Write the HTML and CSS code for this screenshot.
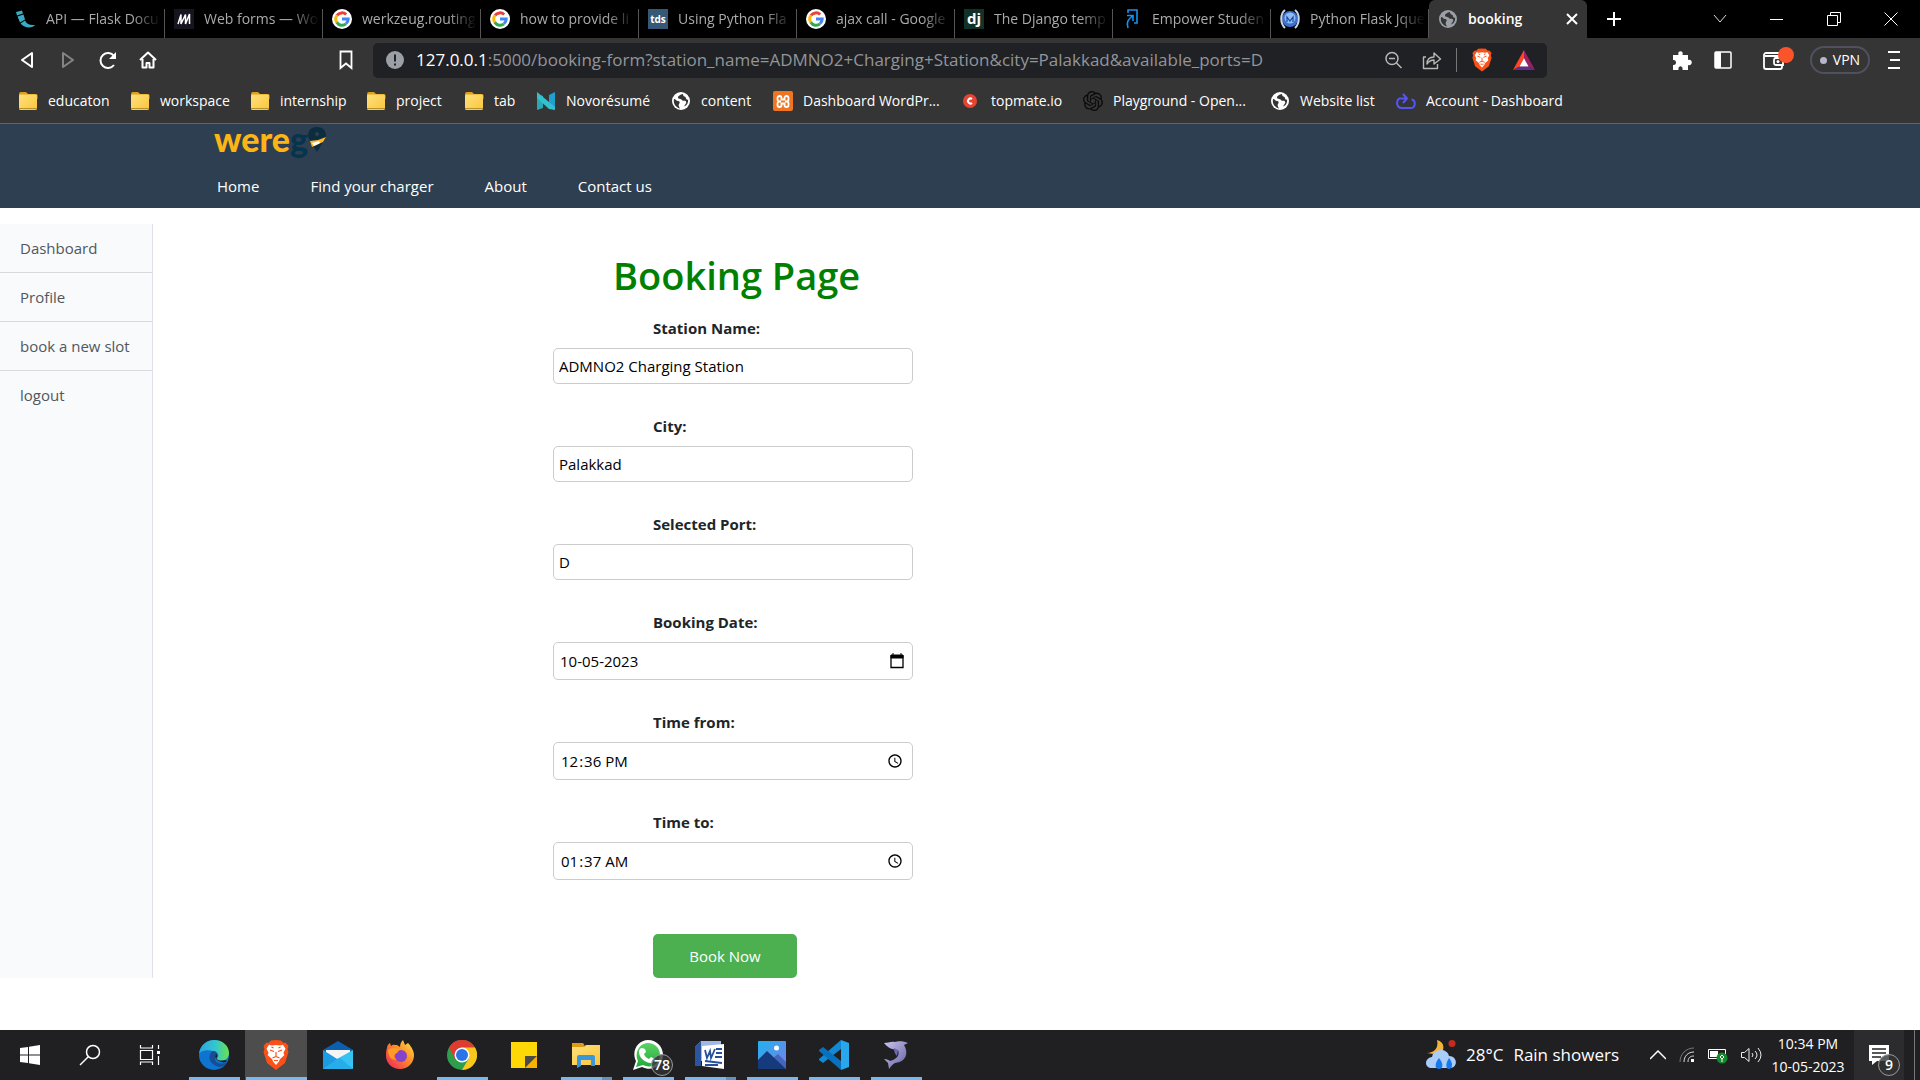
FILE: index.html
```html
<!DOCTYPE html>
<html lang="en">
<head>
<meta charset="utf-8">
<title>booking</title>
<link rel="stylesheet" href="styles.css">
</head>
<body>
<svg class="sprite" aria-hidden="true">
  <defs>
    <linearGradient id="edgeA" x1="0" y1="0" x2="1" y2="0"><stop offset="0" stop-color="#2aa5e0"/><stop offset=".55" stop-color="#33c7cf"/><stop offset="1" stop-color="#6be04b"/></linearGradient>
    <linearGradient id="foxA" x1="1" y1="0" x2="0" y2="1"><stop offset="0" stop-color="#ffe84a"/><stop offset=".45" stop-color="#ff8a25"/><stop offset="1" stop-color="#ee1c63"/></linearGradient>
    <linearGradient id="folderA" x1="0" y1="0" x2="1" y2="1"><stop offset="0" stop-color="#ffe07c"/><stop offset="1" stop-color="#f9c63c"/></linearGradient>
    <linearGradient id="photoA" x1="0" y1="0" x2="1" y2="1"><stop offset="0" stop-color="#1fb2f0"/><stop offset="1" stop-color="#7e7fe8"/></linearGradient>
    <linearGradient id="dolA" x1="0" y1="0" x2="1" y2="1"><stop offset="0" stop-color="#c9c6f2"/><stop offset="1" stop-color="#625c9c"/></linearGradient>
    <linearGradient id="waA" x1="0" y1="0" x2="0" y2="1"><stop offset="0" stop-color="#5dd365"/><stop offset="1" stop-color="#23a83a"/></linearGradient>
  </defs>
  <symbol id="google" viewBox="0 0 20 20"><circle cx="10" cy="10" r="10" fill="#fff"/><g fill="none" stroke-width="3"><path d="M5 6.4A6.2 6.2 0 0 1 14.2 5.5" stroke="#ea4335"/><path d="M4.9 13.5A6.2 6.2 0 0 1 5 6.4" stroke="#fbbc05"/><path d="M14 14.8A6.2 6.2 0 0 1 4.8 13.4" stroke="#34a853"/><path d="M10 10h6.2A6.2 6.2 0 0 1 14 14.7" stroke="#4285f4"/></g></symbol>
  <symbol id="globe" viewBox="0 0 20 20"><circle cx="10" cy="10" r="9" fill="currentColor"/><path d="M3 8c2 0 2 2 4 2s2 2 1 3 0 3 1 4.500C5 16.500 2 13 3 8zM10 3.500c-1 1-3 1-3 3s3 1 4 2.500 3 0 4 1.500-1 3-2 5c3-1 4.500-4 4-7-1 .5-2 0-2-1.500S12 6 12 3z" fill="var(--hole)"/></symbol>
  <symbol id="folder" viewBox="0 0 20 20"><path d="M1 4V3a2 2 0 0 1 2-2h5l2 2h8a1.500 1.500 0 0 1 1.500 1.500V8H1z" fill="#dfa117"/><rect x="1" y="3.500" width="18" height="15.500" rx="1.500" fill="url(#folderA)"/><path d="M1 17.500h18" stroke="#b89025"/></symbol>
  <symbol id="brave" viewBox="0 0 26 30"><path d="M13 0l5 .5L20.500 3l2-.5L25.500 6l-1 3 1 3-3.500 11L13 30 4 23 .5 12l1-3-1-3 3-3.500 2 .5L8 .5z" fill="#fb5016"/><path d="M13 5l4 .6 3-.8 2.500 4-2 4 .8 2.500-4.500 4-.8 2.200L13 25l-3-3.500-.8-2.200-4.500-4L5.500 12.800l-2-4L6 4.800l3 .8z" fill="#fff"/><path d="M7 10l4 1.500M19 10l-4 1.500M13 12v5M9.500 18l3.500-1.500 3.500 1.500M11 20.500h4M8.500 7l2 1M17.500 7l-2 1" fill="none" stroke="#fb5016" stroke-width="1.200"/></symbol>
</svg>

<header class="browser">
  <nav class="tabs" aria-label="Tabs">
    <a class="tab" href="#"><svg class="fav" viewBox="0 0 20 20"><path d="M0 3l6-1.500 1 3-6 2zM1.500 7.500l6-2 1.500 5-5 3zM4.500 14.500L9 11.500c2 4 5 5 10 4.500-2 3-10 4-14.500-1.500z" fill="#3babc3"/></svg><span>API — Flask Docu</span></a>
    <a class="tab" href="#"><svg class="fav" viewBox="0 0 20 20"><path d="M0 0h20v20H0z" fill="#15141f"/><path d="M4 15L7 5.500V15l4.500-9.500V15L15.500 5v10" fill="none" stroke="#fff" stroke-width="1.500"/></svg><span>Web forms — Wo</span></a>
    <a class="tab" href="#"><svg class="fav"><use href="#google"/></svg><span>werkzeug.routing</span></a>
    <a class="tab" href="#"><svg class="fav"><use href="#google"/></svg><span>how to provide li</span></a>
    <a class="tab" href="#"><b class="fav badge-tds">tds</b><span>Using Python Fla</span></a>
    <a class="tab" href="#"><svg class="fav"><use href="#google"/></svg><span>ajax call - Google</span></a>
    <a class="tab" href="#"><b class="fav badge-dj">dj</b><span>The Django temp</span></a>
    <a class="tab" href="#"><svg class="fav" viewBox="0 0 20 20"><path d="M6 4V1h9v13h-3M5 6.500h6V12m0-5.500c-5 4-7 7-5 12.500" fill="none" stroke="#1593f2" stroke-width="1.600"/></svg><span>Empower Studen</span></a>
    <a class="tab" href="#"><svg class="fav" viewBox="0 0 20 20"><circle cx="10" cy="10" r="8" fill="#3c70d0"/><circle cx="10" cy="9" r="5.500" fill="#8dbcf5"/><path d="M5 1C0 5 0 14 5 19M15 1c5 4 5 13 0 18" fill="none" stroke="#cbd4e2" stroke-width="2"/><path d="M7 13V8l3 4 3-4v5" fill="none" stroke="#1e439f" stroke-width="1.200"/></svg><span>Python Flask Jque</span></a>
    <a class="tab active" href="#"><svg class="fav"><use href="#globe"/></svg><span>booking</span><svg class="tab-x" viewBox="0 0 12 12"><path d="M1 1l10 10M11 1L1 11" stroke="#fff" stroke-width="2"/></svg></a>
    <button class="new-tab" aria-label="New tab"><svg width="16" height="16" viewBox="0 0 16 16"><path d="M8 1v14M1 8h14" stroke="#fff" stroke-width="2"/></svg></button>
    <div class="win">
      <button aria-label="Search tabs"><svg width="16" height="14" viewBox="0 0 16 14"><path d="M2 3l6 7 6-7" fill="none" stroke="#ddd"/></svg></button>
      <button aria-label="Minimize"><svg width="14" height="14" viewBox="0 0 14 14"><path d="M0 7.500h13" stroke="#fff"/></svg></button>
      <button aria-label="Restore"><svg width="14" height="14" viewBox="0 0 14 14"><path d="M.5 3.500h10v10H.5zM3.500 3V.500h10v10H11" fill="none" stroke="#fff"/></svg></button>
      <button aria-label="Close"><svg width="14" height="14" viewBox="0 0 14 14"><path d="M.5 .5l13 13M13.500 .5l-13 13" stroke="#fff"/></svg></button>
    </div>
  </nav>

  <div class="toolbar">
    <div class="nav-buttons">
      <button aria-label="Back"><svg width="20" height="20" viewBox="0 0 20 20"><path d="M14 3v14L4 10z" fill="none" stroke="#fff" stroke-width="2" stroke-linejoin="round"/></svg></button>
      <button aria-label="Forward"><svg width="20" height="20" viewBox="0 0 20 20"><path d="M5 3v14l10-7z" fill="none" stroke="#858585" stroke-width="2" stroke-linejoin="round"/></svg></button>
      <button aria-label="Reload"><svg width="20" height="20" viewBox="0 0 20 20"><path d="M16 6A7.500 7.500 0 1 0 16 15" fill="none" stroke="#fff" stroke-width="2"/><path d="M18 2v7h-7z" fill="#fff"/></svg></button>
      <button aria-label="Home"><svg width="20" height="20" viewBox="0 0 20 20"><path d="M2 10l8-7.500L18 10M4.500 9v8.500h4V13h3v4.500h4V9" fill="none" stroke="#fff" stroke-width="2" stroke-linejoin="round"/></svg></button>
    </div>
    <button class="bookmark" aria-label="Bookmark"><svg width="18" height="20" viewBox="0 0 18 20"><path d="M3.500 1.500h11V18L9 13.500 3.500 18z" fill="none" stroke="#fff" stroke-width="1.800"/></svg></button>
    <div class="address">
      <svg width="20" height="20" viewBox="0 0 20 20"><circle cx="10" cy="10" r="9" fill="#9aa0a6"/><path d="M10 4.500v7M10 13.500v2" stroke="#202124" stroke-width="2"/></svg>
      <span class="url"><b>127.0.0.1</b>:5000/booking-form?station_name=ADMNO2+Charging+Station&amp;city=Palakkad&amp;available_ports=D</span>
      <div class="address-icons">
        <svg width="20" height="20" viewBox="0 0 20 20"><circle cx="9" cy="8.500" r="6" fill="none" stroke="#b8b8b8" stroke-width="1.500"/><path d="M6 8.500h6M13.500 13l5 5" stroke="#b8b8b8" stroke-width="1.500"/></svg>
        <svg width="20" height="20" viewBox="0 0 20 20"><path d="M4 7H1.500v11.500h14V14M5 14c0-5 3-7 7-7V3l6.500 6-6.500 5v-4c-3 0-5 1-7 4z" fill="none" stroke="#b8b8b8" stroke-width="1.400" stroke-linejoin="round"/></svg>
        <i></i>
        <svg width="20" height="24"><use href="#brave"/></svg>
        <svg class="bat" width="22" height="22" viewBox="0 0 24 22"><path d="M12 0L0 22l7-4 5-9z" fill="#ff4724"/><path d="M12 0l12 22-7-4-5-9z" fill="#9e1f63"/><path d="M0 22h24l-7-4H7z" fill="#662d91"/><path d="M12 9l5 9H7z" fill="#fff"/></svg>
      </div>
    </div>
    <div class="tools">
      <svg width="20" height="22" viewBox="0 0 20 22"><path d="M1 6h5.500C5 1 12 1 10.500 6H16v5c5-1.500 5 6.500 0 5v5h-5.500c1-5-5-5-4 0H1v-5c4 1 4-6 0-5z" fill="#fff"/></svg>
      <svg width="18" height="18" viewBox="0 0 18 18"><rect x="1" y="1" width="16" height="16" rx="1" fill="none" stroke="#fff" stroke-width="1.500"/><path d="M1 1h6v16H1z" fill="#fff"/></svg>
      <svg width="32" height="26" viewBox="0 0 32 26"><path d="M20 10V8c0-1-1-2-2-2H4C3 6 2 7 2 8v12c0 1.500 1 2 2 2h14c1 0 2-1 2-2v-2M3 9h14M21 11h-7c-2 0-2 1-2 3.500s0 3.500 2 3.500h7z" fill="none" stroke="#fff" stroke-width="1.800"/><circle cx="16" cy="14.500" r="1.500" fill="#fff"/><circle cx="24" cy="8" r="8" fill="#fb542b"/></svg>
      <button class="vpn"><i></i>VPN</button>
      <button class="burger" aria-label="Menu"><svg width="12" height="18" viewBox="0 0 12 18"><path d="M0 1h12M2 9h10M0 17h12" stroke="#fff" stroke-width="2"/></svg></button>
    </div>
  </div>

  <nav class="bookmarks" aria-label="Bookmarks">
    <a href="#"><svg><use href="#folder"/></svg>educaton</a>
    <a href="#"><svg><use href="#folder"/></svg>workspace</a>
    <a href="#"><svg><use href="#folder"/></svg>internship</a>
    <a href="#"><svg><use href="#folder"/></svg>project</a>
    <a href="#"><svg><use href="#folder"/></svg>tab</a>
    <a href="#"><svg viewBox="0 0 20 20"><path d="M1 3l6 2v12l-6 2z" fill="#2aa9b5"/><path d="M13 4l6-3v15l-6 2z" fill="#1e9fd0"/><path d="M1 1l18 15v3l-6-1L1 7z" fill="#35c0cf"/></svg>Novorésumé</a>
    <a href="#"><svg class="white"><use href="#globe"/></svg>content</a>
    <a href="#"><svg viewBox="0 0 20 20"><rect width="20" height="20" rx="2" fill="#ee7623"/><path d="M8 10.500H6.500a2 2 0 0 1-2-2V7a2 2 0 0 1 4 0v1.500h3V7a2 2 0 0 1 4 0v1.500a2 2 0 0 1-2 2H12M8 10.500H6.500a2 2 0 0 0-2 2V14a2 2 0 0 0 4 0v-1.500h3V14a2 2 0 0 0 4 0v-1.500a2 2 0 0 0-2-2H12" fill="none" stroke="#fff" stroke-width="1.800"/></svg>Dashboard WordPr...</a>
    <a href="#"><svg viewBox="0 0 20 20"><circle cx="9" cy="10" r="7" fill="#e64432"/><path d="M11 8a2.500 2.500 0 1 0 0 4" fill="none" stroke="#fff" stroke-width="2"/></svg>topmate.io</a>
    <a href="#"><svg viewBox="0 0 24 24"><path d="M22.282 9.821a5.985 5.985 0 0 0-.516-4.911 6.046 6.046 0 0 0-6.510-2.900A6.065 6.065 0 0 0 4.981 4.182a5.985 5.985 0 0 0-3.998 2.900 6.046 6.046 0 0 0 .743 7.097 5.980 5.980 0 0 0 .511 4.911 6.051 6.051 0 0 0 6.515 2.900A5.985 5.985 0 0 0 13.260 24a6.056 6.056 0 0 0 5.772-4.206 5.990 5.990 0 0 0 3.998-2.900 6.056 6.056 0 0 0-.748-7.073zM13.260 22.430a4.476 4.476 0 0 1-2.876-1.041l.141-.080 4.779-2.758a.795.795 0 0 0 .393-.681v-6.737l2.020 1.169v5.621a4.504 4.504 0 0 1-4.457 4.507zM3.600 18.304a4.471 4.471 0 0 1-.535-3.014l.142.085 4.783 2.759a.771.771 0 0 0 .780 0l5.843-3.369v2.332L9.740 19.950A4.499 4.499 0 0 1 3.600 18.304zM2.341 7.896a4.485 4.485 0 0 1 2.365-1.973v5.677a.766.766 0 0 0 .388.676l5.815 3.355-2.020 1.168-4.869-2.786A4.504 4.504 0 0 1 2.341 7.896zm16.596 3.856l-5.833-3.388L15.120 7.200l4.869 2.791a4.494 4.494 0 0 1-.676 8.105v-5.678a.790.790 0 0 0-.376-.666zm2.011-3.024l-.142-.085-4.774-2.782a.776.776 0 0 0-.785 0L9.409 9.230V6.898l4.859-2.787a4.499 4.499 0 0 1 6.680 4.617zM8.307 12.863l-2.020-1.164V6.074a4.499 4.499 0 0 1 7.375-3.454l-.142.081-4.778 2.758a.795.795 0 0 0-.393.681zm1.097-2.365l2.602-1.500 2.607 1.500v2.999l-2.597 1.500-2.607-1.500z" fill="#0a0a0a" fill-rule="evenodd"/></svg>Playground - Open...</a>
    <a href="#"><svg class="white"><use href="#globe"/></svg>Website list</a>
    <a href="#"><svg viewBox="0 0 20 20"><path d="M3 7.500C-.500 11 1 17 5.500 17h9c5.500 0 5.500-8 1-8.500M3 7.500h7M7 3l4 4.500L7 12" fill="none" stroke="#5555f2" stroke-width="2"/></svg>Account - Dashboard</a>
  </nav>
</header>

<header class="site-header">
  <a class="logo" href="#" aria-label="werego"><span>were</span><em>g</em><svg width="18" height="26" viewBox="0 0 18 26"><path d="M9 26L3 16C-3 9 1 1 9 1s12 8 6 15z" fill="#0c2c3f"/><circle cx="9" cy="8" r="2" fill="#2e3f51"/><path d="M2 15l8-1 8-3-3 5-11 5z" fill="#fdb827"/><path d="M4 17l7-2 1 2-6 3z" fill="#fff"/></svg></a>
  <nav class="site-nav"><a href="#">Home</a><a href="#">Find your charger</a><a href="#">About</a><a href="#">Contact us</a></nav>
</header>

<div class="content">
  <aside class="sidebar"><a href="#">Dashboard</a><a href="#">Profile</a><a href="#">book a new slot</a><a href="#">logout</a></aside>
  <main>
    <form class="booking">
      <h1>Booking Page</h1>
      <div class="field"><label for="station">Station Name:</label><input id="station" type="text" value="ADMNO2 Charging Station"></div>
      <div class="field"><label for="city">City:</label><input id="city" type="text" value="Palakkad"></div>
      <div class="field"><label for="port">Selected Port:</label><input id="port" type="text" value="D"></div>
      <div class="field picker"><label for="date">Booking Date:</label>
        <div class="date-box"><input id="date" type="text" value="10-05-2023"><button type="button" aria-label="Pick a date"><svg width="14" height="16" viewBox="0 0 14 16"><path d="M1 3h12v11.500H1z" fill="none" stroke="#000" stroke-width="1.300"/><path d="M1 2h12v3H1zM3 0v3M11 0v3" stroke="#000"/></svg></button></div>
      </div>
      <div class="field picker"><label for="from">Time from:</label><input id="from" type="time" value="12:36"></div>
      <div class="field picker"><label for="to">Time to:</label><input id="to" type="time" value="01:37"></div>
      <button class="submit" type="submit">Book Now</button>
    </form>
  </main>
</div>

<footer class="taskbar">
  <div class="apps">
    <button aria-label="Start"><svg width="20" height="20" viewBox="0 0 20 20"><path d="M0 3l8-1v7.500H0zM9 1.800L20 0v9.500H9zM0 10.500h8V18l-8-1zM9 10.500h11V20L9 18.200z" fill="#fff"/></svg></button>
    <button aria-label="Search"><svg width="22" height="22" viewBox="0 0 22 22"><circle cx="14" cy="8" r="6.500" fill="none" stroke="#fff" stroke-width="1.500"/><path d="M9.500 12.500L1 21" stroke="#fff" stroke-width="1.500"/></svg></button>
    <button aria-label="Task view"><svg width="22" height="20" viewBox="0 0 22 20"><path d="M1.500 0v3h12V0M1.500 5.500h12v9h-12zM1.500 20v-3h12v3M19.500 0v4M19.500 11v9" fill="none" stroke="#fff" stroke-width="1.200"/><path d="M18 6h3v3h-3z" fill="#fff"/></svg></button>
    <button class="app run" aria-label="Edge"><svg width="30" height="30" viewBox="0 0 30 30"><circle cx="15" cy="15" r="15" fill="#0d74d1"/><path d="M0 14C1 5 8 0 15 0c9 0 15 6 15 13 0 5-4 8-8 8-4 0-5-2-3-4 1-3-1-6-5-6C8 9 1 11 0 14z" fill="url(#edgeA)"/><path d="M14 11c-4 2-7 12 6 16 3 0 6-2 8-5-5 3-13 2-12-5 0-2 1-3 2-3-1-2-2-3-4-3z" fill="#174d94"/><path d="M17 14c-2 3 0 7 6 8 2 1 4 0 5-1l-2-1c-7 2-10-2-8-3 1-1 0-3-1-3z" fill="#202022"/></svg></button>
    <button class="app run current" aria-label="Brave"><svg width="26" height="30"><use href="#brave"/></svg></button>
    <button class="app" aria-label="Mail"><svg width="30" height="28" viewBox="0 0 30 28"><path d="M0 9l15-9 15 9v10H0z" fill="#0c5fae"/><path d="M3 9h24v12H3z" fill="#f4f4f4"/><path d="M0 9l30 19H0z" fill="#1c9be3"/><path d="M30 9v19L14 18z" fill="#36c3f2"/><path d="M0 28l14-10 3-1 13 11z" fill="#27aeea"/></svg></button>
    <button class="app" aria-label="Firefox"><svg width="30" height="30" viewBox="0 0 30 30"><path d="M2 8c0-2 1-4 3-5l1 3c2-2 4-1 6-1l3 2c0-3 1-5 3-7l2 5 3-2c4 4 6 9 6 12 0 8-6 14-14 14S1 23 1 16c0-3 0-5 1-8z" fill="url(#foxA)"/><circle cx="16" cy="16" r="6" fill="#8542cb"/><path d="M3 10c4-3 7-1 12-1l-3 4c-4 1-4 5 0 7-7 0-9-5-9-10z" fill="#ff9b29"/></svg></button>
    <button class="app run" aria-label="Chrome"><svg width="30" height="30" viewBox="0 0 30 30"><circle cx="15" cy="15" r="15" fill="#2f9e4b"/><path d="M2 7.500A15 15 0 0 1 28 7.500H15L8 19z" fill="#e03b30"/><path d="M28 7.500A15 15 0 0 1 15 30l7-12-7-10.500z" fill="#fbc71c"/><circle cx="15" cy="15" r="7.500" fill="#fff"/><circle cx="15" cy="15" r="6" fill="#2a73e8"/></svg></button>
    <button class="app" aria-label="Sticky Notes"><svg width="26" height="26" viewBox="0 0 26 26"><path d="M0 0h26v14L14 26H0z" fill="#fed806"/><path d="M14 14h12L14 26z" fill="#4a4a4a"/><path d="M26 14v12H14z" fill="#fbb000"/></svg></button>
    <button class="app run stack" aria-label="File Explorer"><svg width="28" height="26" viewBox="0 0 28 26"><path d="M0 1h11l2 3-2 3H0z" fill="#dd9a13"/><path d="M0 5h12l2-2h14v20H0z" fill="url(#folderA)"/><path d="M5 26V15q0-2 2-2h14q2 0 2 2v9h-4v-6H9v6z" fill="#3b97db"/></svg></button>
    <button class="app run" aria-label="WhatsApp"><svg width="30" height="30" viewBox="0 0 30 30"><path d="M0 30l3-9C-2 11 5 0 15 0c9 0 15 7 15 15 0 11-11 17-21 12z" fill="#fff"/><path d="M3 27l2-6C1 12 7 3 15 3c7 0 12 5 12 12 0 9-9 14-17 10z" fill="url(#waA)"/><path d="M9 8l3 1 1 3-2 2c1 3 3 4 5 5l2-2 4 2c0 3-3 4-5 4-6-1-11-6-11-11 0-2 1-4 3-4z" fill="#fff"/></svg><span class="count">78</span></button>
    <button class="app run stack" aria-label="Word"><svg width="30" height="28" viewBox="0 0 30 28"><path d="M6 0h20v20H0V6z" fill="#9fb8e5"/><path d="M6 0L0 6v19h6z" fill="#2a569f"/><path d="M7 5l22-2v25L7 25z" fill="#fff"/><path d="M10 9l2 8 3-7 1 7 4-9M21 8h6M21 12h6M20 16h7M10 20l17 2M10 24h13" fill="none" stroke="#24509c" stroke-width="1.800"/></svg></button>
    <button class="app run" aria-label="Photos"><svg width="28" height="28" viewBox="0 0 28 28"><rect width="28" height="28" rx="1" fill="url(#photoA)"/><circle cx="18.500" cy="7" r="2.500" fill="#fff"/><path d="M14 18l6-5 8 8v7z" fill="#4665bd"/><path d="M0 19l9-9 19 18H0z" fill="#163b7c"/></svg></button>
    <button class="app run" aria-label="Visual Studio Code"><svg width="30" height="30" viewBox="0 0 30 30"><path d="M22 0l8 3v24l-8 3z" fill="#28a7ed"/><path d="M22 0v9L4 23 0 20v-1z" fill="#1388d3"/><path d="M22 30v-9L4 7 0 10v1z" fill="#0871bd"/></svg></button>
    <button class="app run" aria-label="MySQL Workbench"><svg width="28" height="28" viewBox="0 0 28 28"><path d="M2 2c4 0 7-2 11-1 3-1 9-1 13 1l-4 2c5 8 2 17-9 18-2 1-4 3-6 6l-1-6-4-4c3 0 5 1 6 2 7-2 10-6 8-11C11 9 6 7 2 2z" fill="url(#dolA)"/><path d="M12 7c0 4 1 6 3 8l1-6z" fill="#6e6aae"/></svg></button>
  </div>
  <div class="tray">
    <div class="weather"><svg width="30" height="30" viewBox="0 0 30 30"><path d="M11 0c8 2 8 10 3 15L1 13C8 13 13 8 11 0z" fill="#f6b33a"/><path d="M6 28c-8 0-8-10 0-11 2-9 15-9 17-1 9 0 9 12 1 12z" fill="#a9cdf7"/><path d="M13 18c-5 6-4 11 0 11s5-5 0-11zM23 18c-4 6-3 11 0 11s5-5 0-11z" fill="#1678ee"/><circle cx="26" cy="3.500" r="3.500" fill="#c82b1d"/></svg><span>28°C</span><span>Rain showers</span></div>
    <div class="tray-icons">
      <svg width="16" height="10" viewBox="0 0 16 10"><path d="M0 9l8-8 8 8" fill="none" stroke="#fff" stroke-width="1.500"/></svg>
      <svg width="16" height="16" viewBox="0 0 16 16"><g fill="none"><path d="M1 15C1 7 7 1 15 1" stroke="#777"/><path d="M5 15C5 9 9 5 15 5M9 15c0-4 2-6 6-6" stroke="#ddd"/></g><path d="M12 12h3v3h-3z" fill="#fff"/></svg>
      <svg width="20" height="18" viewBox="0 0 20 18"><path d="M.5 3.500h17v9H.5z" fill="none" stroke="#fff"/><path d="M2 5h8v6H2z" fill="#fff"/><circle cx="14" cy="12" r="5.500" fill="#148a2c"/><path d="M14 16v-4m-2-1l2-2 2 2-2 2z" fill="none" stroke="#fff"/></svg>
      <svg width="21" height="16" viewBox="0 0 21 16"><path d="M.5 5.500h3L8 1.500v13L3.500 10.500h-3zM11 6q2 2 0 4M14 4q4 4 0 8M17 1q6 7 0 14" fill="none" stroke="#eee"/></svg>
    </div>
    <div class="clock"><span>10:34 PM</span><span>10-05-2023</span></div>
    <button class="notice" aria-label="Notifications"><svg width="20" height="20" viewBox="0 0 20 20"><path d="M0 0h20v16H8l-5 4v-4H0z" fill="#fff"/><path d="M3 4h14M3 8h14M3 12h9" stroke="#222" stroke-width="1.500"/></svg><span class="count">9</span></button>
    <i class="peek"></i>
  </div>
</footer>
</body>
</html>
```
FILE: styles.css
```css
* { box-sizing: border-box; }

body {
  margin: 0;
  min-height: 100vh;
  display: flex;
  flex-direction: column;
  background: #fff;
  color: #212529;
  font: 15px/24px "Open Sans", "Noto Sans", sans-serif;
}

a { color: inherit; text-decoration: none; }
button { border: 0; padding: 0; background: none; color: inherit; font: inherit; }
svg { display: block; flex: none; }
.sprite { position: absolute; width: 0; height: 0; }

.browser { background: #353535; color: #fff; border-bottom: 1px solid #66605e; font-size: 14px; }

/* Tab strip */
.tabs { display: flex; height: 38px; padding-left: 7px; background: #000; }
.tab {
  flex: 0 0 158px;
  min-width: 0;
  display: flex;
  align-items: center;
  gap: 10px;
  padding: 0 4px 0 9px;
  color: #aaa;
  --hole: #353535;
  background: linear-gradient(#555, #555) right bottom / 1px 29px no-repeat;
}
.tab span {
  flex: 1;
  white-space: nowrap;
  mask-image: linear-gradient(90deg, #000 75%, transparent);
}
.tab.active { background: #353535; border-radius: 6px 6px 0 0; padding-right: 9px; font-weight: 600; color: #9aa0a6; }
.tab.active span { color: #fff; mask-image: none; }
.fav { width: 20px; height: 20px; flex: none; text-align: center; line-height: 20px; color: #9aa0a6; }
.badge-tds { background: #355876; color: #fff; font-size: 10px; }
.badge-dj { background: #113228; color: #fff; font-size: 15px; line-height: 18px; }
.tab-x { width: 12px; height: 12px; }
.new-tab { width: 54px; display: grid; place-items: center; }
.win { margin-left: auto; padding-right: 1px; display: flex; }
.win button { width: 57px; display: grid; place-items: center; }

/* Address row */
.toolbar { display: flex; align-items: center; height: 44px; padding-left: 18px; }
.nav-buttons { display: flex; gap: 20px; }
.bookmark { margin: 0 18px 0 179px; }
.address {
  flex: 1;
  display: flex;
  align-items: center;
  height: 35px;
  padding: 0 12px;
  border-radius: 5px;
  background: #202124;
}
.url { margin-left: 11px; color: #92959a; font-size: 17px; white-space: nowrap; }
.url b { font-weight: 400; color: #fff; }
.address-icons { margin-left: auto; display: flex; align-items: center; gap: 19px; }
.address-icons i { width: 1px; height: 24px; background: #777; margin: 0 -4px 0 -5px; }
.bat { margin-left: 2px; }
.tools { display: flex; align-items: center; width: 373px; padding-left: 125px; gap: 22px; }
.tools svg:nth-child(3) { margin-left: 8px; }
.vpn { display: flex; align-items: center; justify-content: center; gap: 6px; width: 60px; height: 28px; margin-left: -6px; border: 2px solid #50505f; border-radius: 14px; }
.vpn i { width: 7px; height: 7px; border-radius: 50%; background: #b5b5cb; }
.burger { margin-left: -4px; }

/* Bookmarks bar */
.bookmarks {
  display: grid;
  grid-template-columns: 112px 120px 116px 98px 72px 135px 102px 188px 122px 187px 126px auto;
  align-items: center;
  height: 41px;
  padding: 0 0 3px 18px;
}
.bookmarks a { display: flex; align-items: center; gap: 10px; white-space: nowrap; }
.bookmarks svg { width: 20px; height: 20px; --hole: #353535; }
.white { color: #fff; }

/* Site header */
.site-header { height: 84px; padding: 0 0 10px 214px; display: flex; flex-direction: column; justify-content: space-between; background: #2e3f51; color: #fff; }
.logo { display: flex; height: 30px; align-items: center; font: 900 34px/24px Lato, "Open Sans", sans-serif; color: #fdb515; }
.logo em { font-style: normal; color: #07344d; }
.site-nav { display: flex; gap: 51px; padding-left: 3px; }

/* Page body */
.content { flex: 1; display: flex; align-items: stretch; padding: 16px 0 52px; }
.sidebar { width: 153px; background: #f8fafc; border-right: 1px solid #dee2e6; color: #51575d; }
.sidebar a { display: block; padding: 12px 20px; }
.sidebar a + a { border-top: 1px solid #d6dadd; }
main { flex: 1; padding: 27px 0 0 400px; }
.booking { width: 360px; }
h1 { margin: 0 0 17px; padding-left: 60px; white-space: nowrap; font-size: 38px; line-height: 48px; font-weight: 600; color: #008000; }
.field { display: flex; flex-direction: column; gap: 8px; margin-bottom: 30px; }
.field label { padding-left: 100px; font-weight: 700; }
.field input {
  width: 100%;
  height: 36px;
  padding: 5px;
  border: 1px solid #ccc;
  border-radius: 5px;
  background: #fff;
  color: #000;
  font: inherit;
}
.picker input { height: 38px; padding: 5px 6px; }
.date-box { position: relative; }
.date-box button { position: absolute; right: 9px; top: 11px; }
.submit { display: block; width: 144px; height: 44px; margin: 54px 0 0 100px; border-radius: 5px; background: #4caf50; color: #fff; }

/* Taskbar */
.taskbar { display: flex; justify-content: space-between; height: 50px; background: #202022; color: #fff; }
.apps { display: flex; }
.apps button { width: 60px; display: grid; place-items: center; position: relative; }
.apps .app { width: 62px; }
.apps .app:nth-child(4) { margin-left: 3px; }
.run { background: linear-gradient(#76b9ed, #76b9ed) center bottom / 51px 3px no-repeat; }
.stack { background: linear-gradient(90deg, #76b9ed 41px, #5d93be 41px) center bottom / 51px 3px no-repeat; }
.current { background: linear-gradient(#76b9ed, #76b9ed) center bottom / 61px 3px no-repeat, #4d4d4e; }
.count {
  position: absolute;
  left: 34px;
  top: 24px;
  width: 22px;
  height: 22px;
  border: 1px solid #999;
  border-radius: 50%;
  background: #333c;
  font: 600 14px/20px "Open Sans", sans-serif;
  text-align: center;
}
.tray { display: flex; align-items: stretch; }
.weather { display: flex; align-items: center; gap: 10px; font-size: 17px; margin-right: 31px; }
.tray-icons { display: flex; align-items: center; gap: 13px; }
.clock { width: 92px; display: flex; flex-direction: column; justify-content: center; text-align: center; font-size: 14px; line-height: 23px; }
.notice { position: relative; width: 50px; background: #2c2c2e; display: grid; place-items: center; }
.notice .count { left: 24px; }
.peek { width: 16px; background: linear-gradient(#777, #777) 10px 0 / 1px 100% no-repeat; }
```
